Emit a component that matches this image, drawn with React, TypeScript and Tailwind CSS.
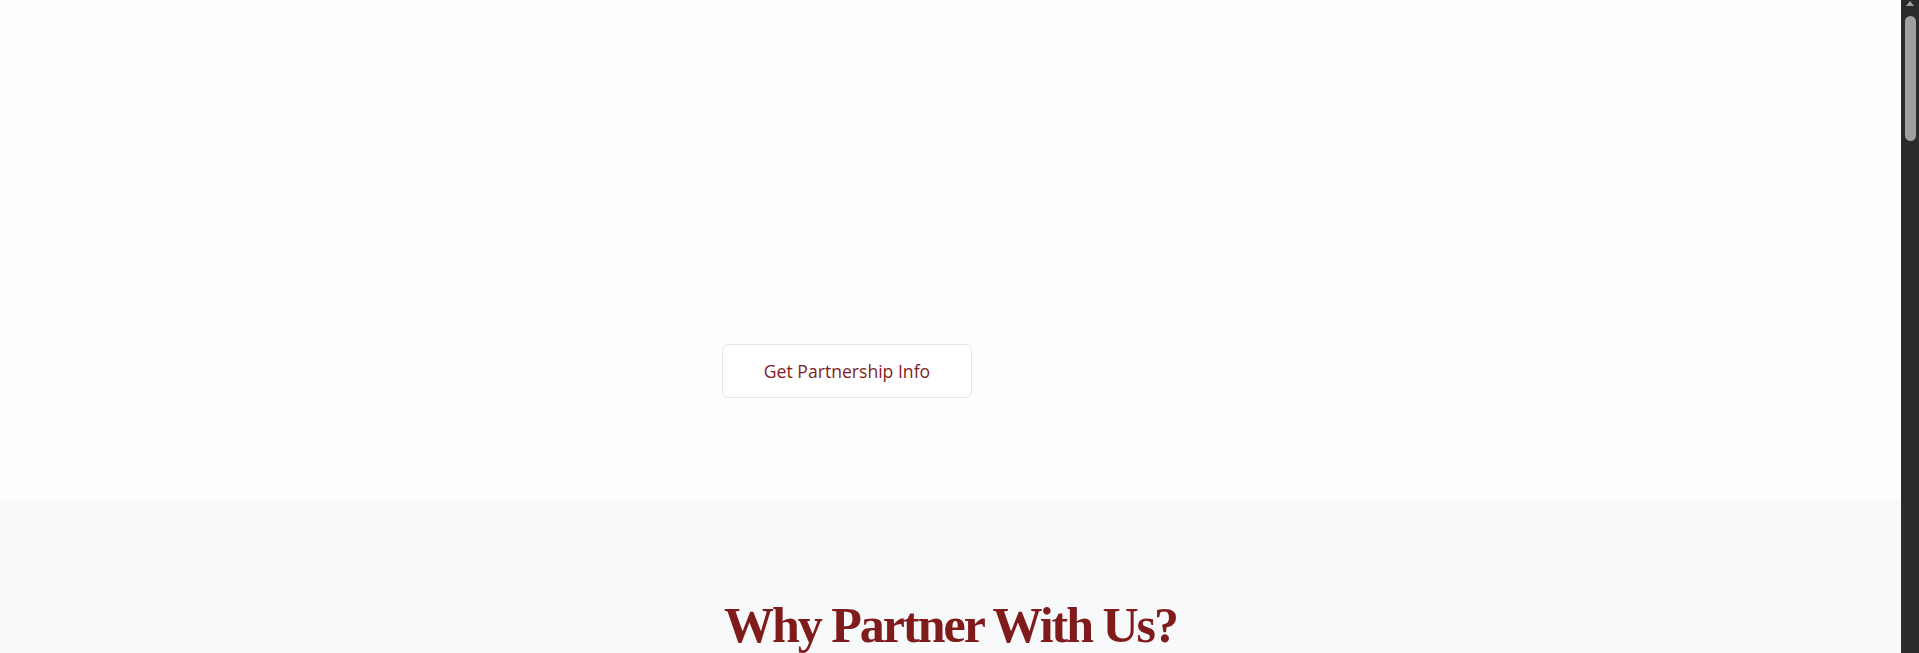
import React from "react";

function Scrollbar() {
  return (
    <div className="relative h-full w-[18px] shrink-0 bg-[#2b2b2b]">
      <svg width="18" height="10" viewBox="0 0 18 10" className="block">
        <path d="M9 1 L13 6 L5 6 Z" fill="#a3a3a3" />
      </svg>
      <div className="mx-auto mt-[6px] h-[125px] w-[11px] rounded-full bg-[#9f9f9f]" />
    </div>
  );
}

export default function App() {
  return (
    <div
      className="flex h-[653px] w-full overflow-hidden bg-[#fefefe]"
      style={{ fontFamily: '"Open Sans", "Noto Sans", sans-serif' }}
    >
      <main className="min-w-0 flex-1 overflow-hidden">
        <section className="h-[499px] bg-[#fefefe]">
          <div className="flex justify-center gap-4 pt-[344px]">
            <button className="flex h-[54px] w-[250px] items-center justify-center rounded-md border border-[#e5e7eb] bg-white text-[17.6px] text-[#7f1d1d]">
              Get Partnership Info
            </button>
            <div className="invisible h-[54px] w-[191px]" />
          </div>
        </section>

        <section className="h-[400px] bg-[#f8f9fa] pt-[96px]">
          <h2
            className="text-center text-[50px] font-bold leading-[1.2] tracking-[-2px] text-[#801b1b]"
            style={{ fontFamily: '"Liberation Serif", "DejaVu Serif", serif' }}
          >
            Why Partner With Us?
          </h2>
        </section>
      </main>
      <Scrollbar />
    </div>
  );
}
